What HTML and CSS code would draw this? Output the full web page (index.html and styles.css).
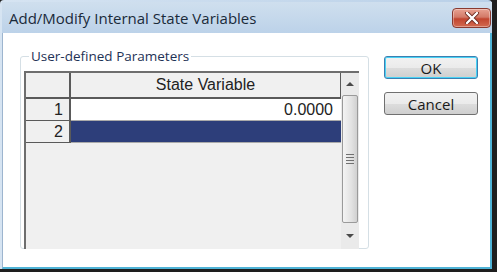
FILE: index.html
```html
<!DOCTYPE html>
<html lang="en">
  <head>
    <meta charset="UTF-8" />
    <title>Add/Modify Internal State Variables</title>
    <link rel="stylesheet" href="styles.css">
  </head>
  <body>
    <div class="window">
      <div class="titlebar">
        <span class="title">Add/Modify Internal State Variables</span>
        <button class="close" type="button">
          <svg width="16" height="12" viewBox="0 0 16 12">
            <path d="M3 1 L13 11 M13 1 L3 11" stroke="#6b2a20" stroke-width="4" stroke-linecap="round" />
            <path d="M3 1 L13 11 M13 1 L3 11" stroke="#ffffff" stroke-width="2.4" stroke-linecap="round" />
          </svg>
        </button>
      </div>

      <div class="content">
        <fieldset class="group">
          <legend>User-defined Parameters</legend>
          <div class="grid">
            <div class="table">
              <div class="row head">
                <div class="rowhead"></div>
                <div class="cell">State Variable</div>
              </div>
              <div class="row">
                <div class="rowhead">1</div>
                <div class="cell value">0.0000</div>
              </div>
              <div class="row selected">
                <div class="rowhead">2</div>
                <div class="cell value"></div>
              </div>
            </div>
            <div class="scrollbar">
              <div class="arrow">
                <svg width="8" height="5" viewBox="0 0 8 5"><path d="M0 5 L4 1 L8 5 Z" fill="#4a4a4a" /></svg>
              </div>
              <div class="thumb">
                <span></span><span></span><span></span><span></span>
              </div>
              <div class="arrow down">
                <svg width="8" height="5" viewBox="0 0 8 5"><path d="M0 0 L8 0 L4 4 Z" fill="#4a4a4a" /></svg>
              </div>
            </div>
          </div>
        </fieldset>

        <div class="buttons">
          <button class="btn default" type="button">OK</button>
          <button class="btn" type="button">Cancel</button>
        </div>
      </div>
    </div>
  </body>
</html>
```

FILE: styles.css
```css
html,
body {
  margin: 0;
  padding: 0;
  background-color: #1e1e1e;
}

.window {
  width: 492px;
  height: 269px;
  box-sizing: border-box;
  padding-top: 2px;
  padding-left: 2px;
  background: linear-gradient(to right, #d6e4f2, #b9d0e8);
  display: flex;
  flex-direction: column;
  border-top-left-radius: 4px;
  border-top-right-radius: 4px;
}

.titlebar {
  height: 31px;
  display: flex;
  align-items: flex-start;
  justify-content: space-between;
  padding-left: 7px;
  padding-right: 1px;
  background: linear-gradient(to bottom, #cfdfee, #bcd2e9);
}

.title {
  font-family: "Open Sans", sans-serif;
  font-size: 15px;
  color: #1a2a3a;
  margin-top: 6px;
}

.close {
  width: 39px;
  height: 20px;
  margin-top: 6px;
  border: 1px solid #8a3a30;
  border-radius: 4px;
  background: linear-gradient(to bottom, #e8a292 0%, #d37a68 45%, #c2452f 55%, #d26a50 100%);
  box-shadow: inset 0 0 0 1px rgba(255, 255, 255, 0.35);
  display: flex;
  align-items: center;
  justify-content: center;
  padding: 0;
}

.content {
  flex: 1;
  background-color: #ffffff;
  border-left: 1px solid #9db5cf;
  border-right: 2px solid #4fb3d6;
  border-bottom: 2px solid #4fb3d6;
  display: flex;
  padding: 16px 0 0 17px;
}

.group {
  margin: 0;
  width: 349px;
  height: 200px;
  box-sizing: border-box;
  border: 1px solid #d5dfe5;
  border-radius: 3px;
  box-shadow: inset 1px 1px 0 #ffffff;
  padding: 8px 9px 2px 3px;
}

.group legend {
  font-family: "Open Sans", sans-serif;
  font-size: 13.5px;
  color: #1e3256;
  padding: 0 2px;
  margin-left: 5px;
  line-height: 14px;
}

.grid {
  display: flex;
  height: 176px;
  border-top: 2px solid #6e6e6e;
  border-left: 2px solid #6e6e6e;
  background-color: #f0f0f0;
  font-family: "Liberation Sans", Arial, sans-serif;
  font-size: 16px;
  color: #222222;
}

.table {
  flex: 1;
}

.row {
  display: flex;
  height: 22px;
}

.row.head {
  height: 26px;
}

.rowhead {
  width: 45px;
  box-sizing: border-box;
  background-color: #f0f0f0;
  border-right: 2px solid #5a5a5a;
  border-bottom: 1px solid #5a5a5a;
  text-align: right;
  padding-right: 6px;
  line-height: 21px;
}

.row.head .rowhead {
  border-bottom: 2px solid #5a5a5a;
}

.cell {
  flex: 1;
  box-sizing: border-box;
  border-bottom: 1px solid #aaaaaa;
  line-height: 21px;
}

.row.head .cell {
  text-align: center;
  line-height: 24px;
  border-bottom: 2px solid #5a5a5a;
  border-right: 1px solid #5a5a5a;
}

.cell.value {
  background-color: #ffffff;
  text-align: right;
  padding-right: 8px;
}

.row.selected .cell.value {
  background-color: #2d3e7a;
}

.scrollbar {
  width: 18px;
  display: flex;
  flex-direction: column;
  background-color: #eaeaea;
}

.arrow {
  height: 20px;
  display: flex;
  align-items: center;
  justify-content: center;
}

.arrow.down {
  height: 26px;
}

.thumb {
  flex: 1;
  margin: 2px 1px 0 1px;
  border: 1px solid #9a9a9a;
  border-radius: 2px;
  background: linear-gradient(to right, #f4f4f4, #e2e2e2 60%, #d0d0d0);
  display: flex;
  flex-direction: column;
  align-items: center;
  justify-content: center;
  gap: 2px;
}

.thumb span {
  width: 8px;
  height: 1px;
  background-color: #707070;
}

.buttons {
  display: flex;
  flex-direction: column;
  gap: 13px;
  margin-left: 15px;
  padding-top: 7px;
}

.btn {
  width: 94px;
  height: 23px;
  font-family: "Open Sans", sans-serif;
  font-size: 15px;
  color: #1a1a1a;
  border: 1px solid #707070;
  border-radius: 3px;
  background: linear-gradient(to bottom, #f2f2f2 0%, #ebebeb 50%, #dddddd 51%, #cfcfcf 100%);
  padding: 0;
  line-height: 20px;
}

.btn.default {
  border-color: #3c7fb1;
  box-shadow: inset 0 0 0 1px #48d2f5;
}
```
